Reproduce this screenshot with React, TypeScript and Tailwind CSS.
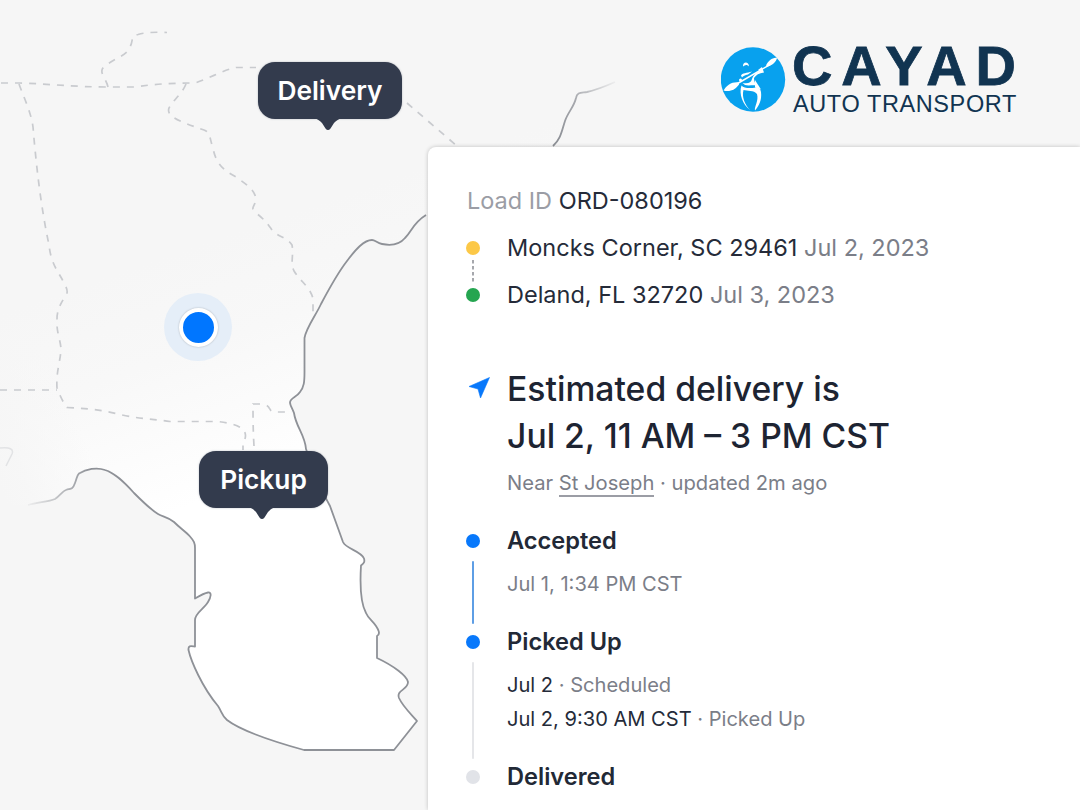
import type { ReactNode } from "react";

const COAST =
  "M28 505 C38 502 48 502 55 499 C60 496 62 491 67 489.500 C71 489 73 489 75 483 C77 478 77 475 79 473.500 C86 469 97 467 105 470 C115 473 124 482 134 493 C145 504 153 511 158 514 C163 517 168 517 174 522 C180 528 186 532 190 536.500 C194 541 195 543 195 548 V598.500 C201 595 205 593 208 592.500 C212 592 211 597 208 602 C204 609 195 613 195 620 V646.500 C191 646 188 645 188.500 650 C191 661 202 687 218 706 C222 712 222 716 227 720 C240 730 268 740 304 750 H394 L417 721 C413 716 403 707 399 698 C396 690 408 690 408 682 C407 676 394 666 377 658 V636 C381 634 378 629 376 626 C372 620 368 618 366 613 C360 602 360 582 361 565.500 C364 563 365 562 364 558.500 C361 551 346 549 343 542 L330 506 C325 497 315 475 306 449 C305 435 296 427 294 413 C292 408 290 405 290 402.500 C290 398 297 397 300 392 C304 387 304.500 382 304.500 372 V338 C306 328 316 315 321 304 C330 287 340 270 347 261 C356 249 364 240 372 240 C375 240 377 243 382 244 C392 246 400 244 405 238 C412 231 413 223 426 215";

const LAND = COAST + " L560 140 L560 60 L0 60 V505 Z";

const BORDERS = [
  "M1 83 H20 C50 84 75 87 108 87 H134 C155 84 172 83 195 83 C208 79 223 70 236 67.500 H256",
  "M108 87 C106 78 98 72 104 67 C114 58 127 56 130 47 C134 39 130 36 138 34.500 C147 32 157 32 167 32.500",
  "M19 84 C24 98 31 112 33 127 C37 175 42 212 49 245 C51 263 57 270 62 279 C64 283 68 289 67 293 C62 302 57 308 57 319 C56 332 61 341 61 350 C60 363 56 372 57 388 C61 398 63 402 67 407.500 C95 409 102 410 122 415 C140 419 154 419 170 421.500 H218 C239 424 251 430 243 443 V450",
  "M0 390 H57",
  "M186 84 C182 94 174 99 169 108 C166 116 178 121 204 130 C211 133 209 137 213 148 C216 166 227 172 236 177 C246 184 255 190 256 199 C255 207 250 207 255 212 C266 221 267 223 272 230 C278 237 287 237 292 245 C294 255 290 262 294 271 C301 282 311 288 313 299 V313",
  "M407 103 L457 146",
  "M254 446 C253 430 253 416 253 404 H261 C273 405 267 412 275 412 H292",
];

function TravelMap() {
  return (
    <svg className="absolute inset-0 h-full w-full" viewBox="0 0 1080 810" fill="none" aria-hidden="true">
      <defs>
        <linearGradient id="land" gradientUnits="userSpaceOnUse" x1="155" y1="260" x2="235" y2="490">
          <stop offset="0" stopColor="#f6f6f6" />
          <stop offset="0.400" stopColor="#f8f8f8" />
          <stop offset="0.750" stopColor="#fcfcfc" />
          <stop offset="1" stopColor="#ffffff" />
        </linearGradient>
        <linearGradient id="west" gradientUnits="userSpaceOnUse" x1="0" y1="490" x2="90" y2="450">
          <stop offset="0" stopColor="#f6f6f6" />
          <stop offset="0.250" stopColor="#f6f6f6" stopOpacity="0.850" />
          <stop offset="1" stopColor="#f6f6f6" stopOpacity="0" />
        </linearGradient>
        <linearGradient id="coast" gradientUnits="userSpaceOnUse" x1="28" y1="0" x2="90" y2="0">
          <stop offset="0" stopColor="#8e9197" stopOpacity="0.100" />
          <stop offset="1" stopColor="#8e9197" />
        </linearGradient>
        <linearGradient id="north" gradientUnits="userSpaceOnUse" x1="560" y1="140" x2="616" y2="82">
          <stop offset="0" stopColor="#8e9197" />
          <stop offset="0.500" stopColor="#a7a9ae" />
          <stop offset="1" stopColor="#a7a9ae" stopOpacity="0.100" />
        </linearGradient>
      </defs>
      <path d={LAND} fill="url(#land)" />
      <path d={LAND} fill="url(#west)" />
      <g stroke="#c9cbcf" strokeWidth="1.700" strokeDasharray="7 7">
        {BORDERS.map((d) => (
          <path key={d} d={d} />
        ))}
      </g>
      <path d={COAST} stroke="url(#coast)" strokeWidth="1.800" strokeLinejoin="round" />
      <path
        d="M553 146 C561 139 562 130 565 121 C568 112 574 107 576 98 C577 92 581 93 587 92 C596 90 606 86 615 82"
        stroke="url(#north)"
        strokeWidth="1.800"
      />
      <path d="M0 448 C10 447 14 449 12 454 L6 466" stroke="#e2e3e5" strokeWidth="1.500" />
    </svg>
  );
}

function Pin({ className, children }: { className: string; children: ReactNode }) {
  return (
    <div
      className={`absolute flex items-center justify-center rounded-[17px] bg-[#333b4d] text-[26.300px] font-semibold text-white shadow-[0_0_2px_rgba(51,59,77,0.350)] ${className}`}
    >
      {children}
      <svg className="absolute top-full left-1/2 -mt-px -ml-[2px] h-[13px] w-[28px] -translate-x-1/2" viewBox="0 0 28 13" aria-hidden="true">
        <path d="M0 0 H28 C24 1 22 3 20 5 L16.500 10.500 Q14 13.500 11.500 10.500 L8 5 C6 3 4 1 0 0Z" fill="#333b4d" />
      </svg>
    </div>
  );
}

function Logo() {
  return (
    <div className="flex items-start font-['Liberation_Sans',Arial,sans-serif] text-[#113451]">
      <svg className="mt-[47px] h-[65px] w-[65px]" viewBox="0 0 65 65" aria-hidden="true">
        <circle cx="32" cy="32.500" r="32.200" fill="#08a1ee" />
        <g fill="#fff">
          <path d="M22 19.500 C21.500 14 28 14 28 19.500 C26.500 17.500 24 17.500 22 19.500Z" />
          <path d="M45 18.500 C47 14 52 10 56 11 C55 15 51 18.500 46.500 19.500Z" />
          <path d="M2.500 43.500 C6 38 11 34.500 18 35.500 L18 37.500 C15 42 9 45.500 2.500 43.500Z" />
          <path d="M20 28.500 C21 26 26 26 31 24.500 L27 27.500 C24 28 22 29 21 30.500Z" />
          <path d="M37 23 L41 20 L43 25.500 C38 26 35 28 33 31 C33 34 34 36 35.500 38.500 C31 38 27 39 24 38 L21.500 36 C27 37 30 36 31 32 C32 29 34 26 39 24Z" />
          <path d="M20.500 38.500 C23 41.500 29 41.500 35 40.500 C38 40.500 39.500 42 40 45 C41 53 38 59 34 63.500 C33 60 38 54 36 47 C33 43 26 44 22.500 43 C20.500 50 24 58 29 63 C22 58 17.500 47 20.500 38.500Z" />
          <path d="M34 33 L40 42.500 L34 40.500Z" />
        </g>
        <path d="M14 38 L50 17" stroke="#fff" strokeWidth="1.500" />
        <circle cx="19.500" cy="33" r="1.500" fill="#fff" />
      </svg>
      <div className="mt-[41px] ml-[6px] flex w-[230px] flex-col whitespace-nowrap">
        <span className="h-[50px] text-[56px] leading-[50px] font-bold tracking-[8.800px] [-webkit-text-stroke:0.800px_#113451]">CAYAD</span>
        <span className="ml-[1px] text-[23.500px] leading-[26px] tracking-[0.600px]">AUTO TRANSPORT</span>
      </div>
    </div>
  );
}

function Dot({ className }: { className: string }) {
  return <span className={`size-[14px] shrink-0 rounded-full ${className}`} />;
}

function Stop({ dot, place, date }: { dot: string; place: string; date: string }) {
  return (
    <div className="flex h-[47px] items-center">
      <Dot className={`-mt-[2px] ${dot}`} />
      <p className="-mt-[2px] ml-[27px] text-[#252b39]">
        {place} <span className="text-[#7b7e88]">{date}</span>
      </p>
    </div>
  );
}

function Step({ title, dot, line, children }: { title: string; dot: string; line?: string; children?: ReactNode }) {
  return (
    <div className="flex">
      <div className="flex w-[14px] flex-col items-center pt-[13px]">
        <Dot className={dot} />
        {line && <span className={`mt-[13px] -mb-[2px] w-[2px] flex-1 rounded-full ${line}`} />}
      </div>
      <div className="ml-[27px]">
        <h2 className="text-[23.600px] leading-[40px] font-semibold text-[#222936]">{title}</h2>
        {children}
      </div>
    </div>
  );
}

export default function App() {
  return (
    <main className="relative h-[810px] w-[1080px] overflow-hidden bg-[#f6f6f6] font-[Inter,sans-serif]">
      <TravelMap />
      <Pin className="top-[62px] left-[258px] h-[57px] w-[144px]">Delivery</Pin>
      <div className="absolute top-[293px] left-[164px] flex size-[68px] items-center justify-center rounded-full bg-[#e5eef8]">
        <span className="size-[39px] rounded-full border-[4px] border-white bg-[#0076ff] shadow-[0_0_2px_rgba(0,0,0,0.250)]" />
      </div>
      <Pin className="top-[451px] left-[199px] h-[57px] w-[129px]">Pickup</Pin>

      <div className="relative flex h-full flex-col">
        <header className="flex h-[147px] shrink-0 justify-end pr-[58px]">
          <Logo />
        </header>
        <section className="ml-[428px] flex-1 rounded-tl-[8px] bg-white pt-[34px] pl-[38px] text-[23.500px] whitespace-nowrap shadow-[0_0_4px_rgba(0,0,0,0.220)]">
          <p className="ml-[1px] leading-[40px] text-[#252b39]">
            <span className="text-[#9b9da5]">Load ID</span> ORD-080196
          </p>
          <div className="relative mt-[4px]">
            <Stop dot="bg-[#fcc847]" place="Moncks Corner, SC 29461" date="Jul 2, 2023" />
            <Stop dot="bg-[#25a550]" place="Deland, FL 32720" date="Jul 3, 2023" />
            <svg className="absolute top-[35px] left-[6px] h-[24px] w-[2px]" viewBox="0 0 2 24" aria-hidden="true">
              <path d="M1 0 V24" stroke="#a6a8ad" strokeWidth="2" strokeDasharray="3.500 2.500" />
            </svg>
          </div>
          <div className="mt-[46px] flex">
            <svg className="mt-[12px] ml-[2px] h-[22px] w-[22px]" viewBox="0 0 22 22" aria-hidden="true">
              <path d="M21.500 0.500 L12.500 21 L10 12 L1 9.500Z" fill="#0878fb" stroke="#0878fb" strokeWidth="0.600" strokeLinejoin="round" />
            </svg>
            <div className="ml-[17px]">
              <h1 className="text-[33.700px] leading-[47px] font-medium text-[#1d2432]">
                Estimated delivery is
                <br />
                Jul 2, 11 AM – 3 PM CST
              </h1>
              <p className="pt-[1px] text-[20.200px] leading-[46px] text-[#7b7e88]">
                Near <span className="border-b-2 border-[#9b9da5]">St Joseph</span> · updated 2m ago
              </p>
            </div>
          </div>
          <div className="mt-[15px] text-[20.080px] leading-[34px] text-[#7b7e88]">
            <Step title="Accepted" dot="bg-[#0878fb]" line="bg-[#5e9ee5]">
              <p className="pt-[6px] pb-[21px]">Jul 1, 1:34 PM CST</p>
            </Step>
            <Step title="Picked Up" dot="bg-[#0878fb]" line="bg-[#e5e6e9]">
              <p className="pt-[6px]">
                <span className="text-[#252b39]">Jul 2</span> · Scheduled
              </p>
              <p className="pb-[21px]">
                <span className="text-[#252b39]">Jul 2, 9:30 AM CST</span> · Picked Up
              </p>
            </Step>
            <Step title="Delivered" dot="bg-[#e1e3e8]" />
          </div>
        </section>
      </div>
    </main>
  );
}
